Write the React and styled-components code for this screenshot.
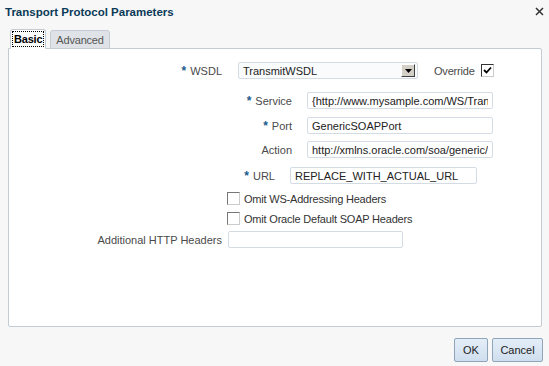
import React from 'react';
import styled, { createGlobalStyle } from 'styled-components';

const GlobalStyle = createGlobalStyle`
html, body {
  margin: 0;
  padding: 0;
  background: #f7f7f7;
}
body {
  font-family: Tahoma, "Liberation Sans", Arial, sans-serif;
  font-size: 11px;
  color: #333;
}
`;

const Dialog = styled.div`
display: flex;
flex-direction: column;
width: 549px;
height: 366px;
background: #f7f7f7;
box-sizing: border-box;
`;

const Header = styled.div`
display: flex;
align-items: center;
justify-content: space-between;
height: 23px;
padding: 0 4px 0 5px;
`;

const Title = styled.div`
font-weight: bold;
font-size: 11.5px;
color: #0b3a58;
`;

const CloseButton = styled.div`
display: flex;
width: 10px;
height: 10px;
margin-top: 1px;
`;

const TabBar = styled.div`
display: flex;
align-items: flex-end;
gap: 4px;
height: 20px;
padding: 6px 0 0 10px;
position: relative;
z-index: 1;
margin-bottom: -1px;
`;

const Tab = styled.div`
display: flex;
align-items: center;
justify-content: center;
box-sizing: border-box;
height: ${p => (p.$active ? 20 : 19)}px;
padding: 0 ${p => (p.$active ? 2 : 5)}px;
border: 1px solid #c3cbd3;
border-bottom: ${p => (p.$active ? '1px solid #fff' : '1px solid #c3cbd3')};
border-radius: 3px 3px 0 0;
background: ${p => (p.$active ? '#fff' : '#dfe3e8')};
color: ${p => (p.$active ? '#000' : '#555')};
font-weight: ${p => (p.$active ? 'bold' : 'normal')};
font-size: 11px;
letter-spacing: -0.2px;
`;

const FocusText = styled.span`
outline: 1px dotted #000;
padding: 1px 1px;
`;

const Panel = styled.div`
flex: 1;
margin: 0 7px 0 8px;
border: 1px solid #c3cbd3;
border-radius: 0 2px 2px 2px;
background: #fff;
display: flex;
flex-direction: column;
`;

const Row = styled.div`
display: flex;
align-items: center;
height: 17px;
margin-top: ${p => p.$top}px;
padding-left: ${p => p.$indent || 0}px;
`;

const Label = styled.div`
width: ${p => p.$width}px;
flex: none;
text-align: right;
color: #4a4a4a;
margin-right: ${p => (p.$gap === undefined ? 15 : p.$gap)}px;
white-space: nowrap;
`;

const Req = styled.span`
color: #1d5b8c;
font-weight: bold;
font-size: 12px;
margin-right: 4px;
`;

const TextField = styled.input`
box-sizing: border-box;
width: ${p => p.$width}px;
height: 17px;
border: 1px solid #d3dce4;
border-radius: 2px;
background: #fff;
padding: 0 4px;
font-family: inherit;
font-size: 11px;
color: #222;
outline: none;
`;

const Select = styled.div`
box-sizing: border-box;
display: flex;
align-items: center;
justify-content: space-between;
width: 180px;
height: 17px;
border: 1px solid #d3dce4;
border-radius: 2px;
background: #f9fbfd;
padding: 0 2px 0 4px;
color: #222;
`;

const DropButton = styled.div`
box-sizing: border-box;
width: 14px;
height: 13px;
background: #d4d0c8;
border: 1px solid;
border-color: #fff #404040 #404040 #fff;
display: flex;
align-items: center;
justify-content: center;
`;

const OverrideLabel = styled.span`
margin-left: 16px;
color: #4a4a4a;
margin-right: 6px;
letter-spacing: -0.2px;
`;

const Box = styled.span`
box-sizing: border-box;
display: inline-flex;
align-items: center;
justify-content: center;
width: 13px;
height: 13px;
border: 1px solid;
border-color: ${p => (p.$checked ? '#333 #ccc #ccc #333' : '#777 #ccc #ccc #777')};
background: #fff;
margin-right: 4px;
`;

const CheckText = styled.span`
color: #333;
letter-spacing: -0.2px;
`;

const Footer = styled.div`
display: flex;
justify-content: flex-end;
gap: 4px;
height: 39px;
padding: 11px 6px 0 0;
box-sizing: border-box;
`;

const Button = styled.button`
box-sizing: border-box;
height: 24px;
min-width: ${p => p.$width}px;
padding: 0 6px;
border: 1px solid #8fa5ba;
border-radius: 2px;
background: linear-gradient(#e4eef8, #cfdeee);
font-family: inherit;
font-size: 11px;
color: #222;
`;

const Check = () => (
  <svg width="9" height="9" viewBox="0 0 9 9">
    <path d="M1 4 L3.5 6.5 L8 1.5" fill="none" stroke="#000" strokeWidth="1.8" />
  </svg>
);

export default function App() {
  return (
    <Dialog>
      <GlobalStyle />
      <Header>
        <Title>Transport Protocol Parameters</Title>
        <CloseButton>
          <svg width="9" height="9" viewBox="0 0 9 9">
            <path d="M1 1 L8 8 M8 1 L1 8" stroke="#333" strokeWidth="1.5" />
          </svg>
        </CloseButton>
      </Header>
      <TabBar>
        <Tab $active><FocusText>Basic</FocusText></Tab>
        <Tab>Advanced</Tab>
      </TabBar>
      <Panel>
        <Row $top={13}>
          <Label $width={213} $gap={16}><Req>*</Req>WSDL</Label>
          <Select>
            TransmitWSDL
            <DropButton>
              <svg width="7" height="4" viewBox="0 0 7 4"><path d="M0 0 H7 L3.5 4 Z" fill="#000" /></svg>
            </DropButton>
          </Select>
          <OverrideLabel>Override</OverrideLabel>
          <Box $checked><Check /></Box>
        </Row>
        <Row $top={13}>
          <Label $width={283}><Req>*</Req>Service</Label>
          <TextField $width={186} readOnly value="{http://www.mysample.com/WS/TransmitWSDL}TransmitService" />
        </Row>
        <Row $top={8}>
          <Label $width={283}><Req>*</Req>Port</Label>
          <TextField $width={186} readOnly value="GenericSOAPPort" />
        </Row>
        <Row $top={7}>
          <Label $width={283}>Action</Label>
          <TextField $width={186} readOnly value="http://xmlns.oracle.com/soa/generic/" />
        </Row>
        <Row $top={9}>
          <Label $width={266}><Req>*</Req>URL</Label>
          <TextField $width={187} readOnly value="REPLACE_WITH_ACTUAL_URL" />
        </Row>
        <Row $top={6} $indent={218}>
          <Box />
          <CheckText>Omit WS-Addressing Headers</CheckText>
        </Row>
        <Row $top={3} $indent={218}>
          <Box />
          <CheckText>Omit Oracle Default SOAP Headers</CheckText>
        </Row>
        <Row $top={4}>
          <Label $width={213} $gap={6}>Additional HTTP Headers</Label>
          <TextField $width={175} readOnly value="" />
        </Row>
      </Panel>
      <Footer>
        <Button $width={34}>OK</Button>
        <Button $width={51}>Cancel</Button>
      </Footer>
    </Dialog>
  );
}
